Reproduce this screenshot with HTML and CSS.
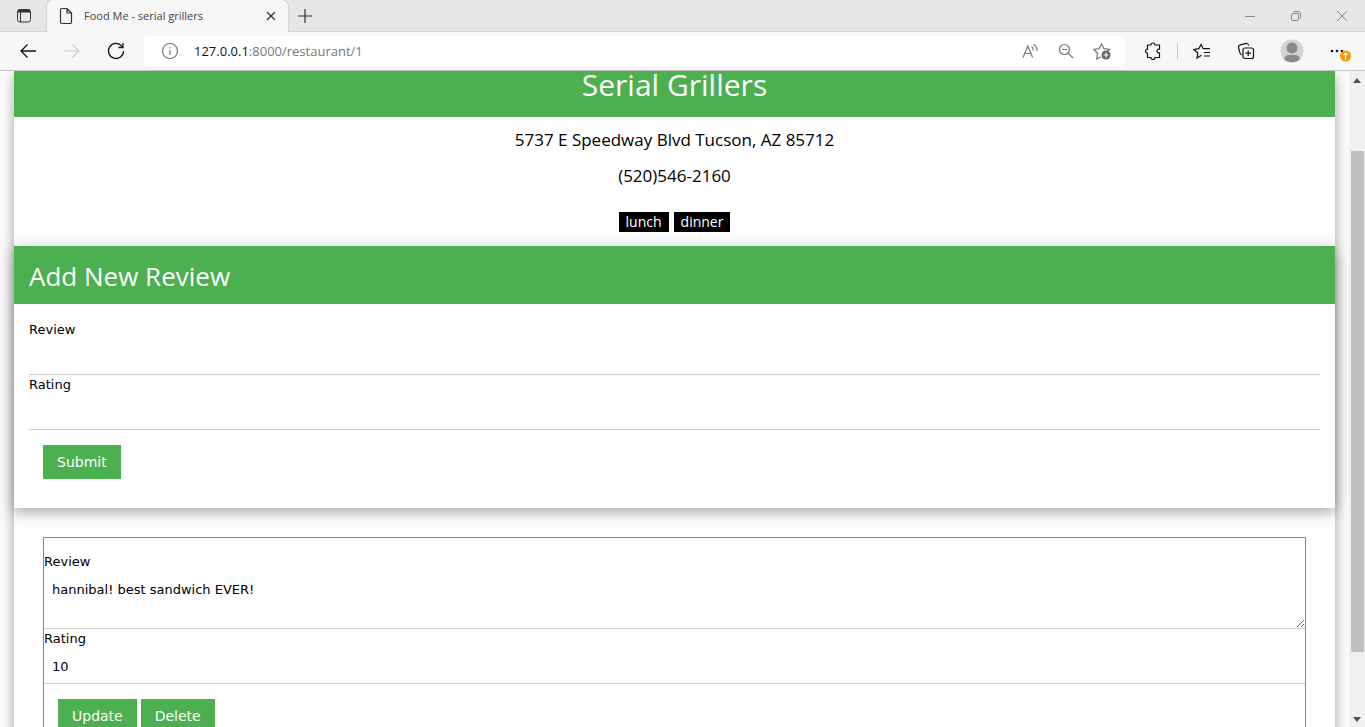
FILE: index.html
```html
<!DOCTYPE html>
<html lang="en">
<head>
<meta charset="utf-8">
<title>Food Me - serial grillers</title>
<link rel="stylesheet" href="styles.css">
</head>
<body>
<header class="browser">
  <div class="tabs">
    <button class="icon-btn tab-actions" aria-label="Tab actions"><svg width="16" height="16" viewBox="0 0 16 16" fill="none" stroke="#333"><rect x="1.500" y="1.500" width="13" height="12.500" rx="2.500"/><path d="M2 3.500h12M2 2.500h12" stroke-width="2.200"/><path d="M4.500 4v10"/></svg></button>
    <div class="tab">
      <svg width="14" height="18" viewBox="0 0 14 18" fill="none" stroke="#333" stroke-width="1.200"><path d="M3 1.500h5l4.500 4.500v9a1.500 1.500 0 0 1-1.500 1.500H3A1.500 1.500 0 0 1 1.500 15V3A1.500 1.500 0 0 1 3 1.500zM8 1.500V6h4.500"/></svg>
      <span class="tab-title">Food Me - serial grillers</span>
      <button class="icon-btn" aria-label="Close tab"><svg width="10" height="10" viewBox="0 0 10 10" stroke="#333" stroke-width="1.300"><path d="M1 1l8 8M9 1L1 9"/></svg></button>
    </div>
    <button class="icon-btn new-tab" aria-label="New tab"><svg width="16" height="16" viewBox="0 0 16 16" stroke="#333" stroke-width="1.200"><path d="M8 1v14M1 8h14"/></svg></button>
    <div class="window-controls">
      <button class="icon-btn" aria-label="Minimize"><svg width="12" height="12" viewBox="0 0 12 12" stroke="#888"><path d="M1 6.500h10"/></svg></button>
      <button class="icon-btn" aria-label="Restore"><svg width="12" height="12" viewBox="0 0 12 12" fill="none" stroke="#888"><rect x="1.500" y="3.500" width="7" height="7" rx="1.500"/><path d="M3.500 1.500H8A2.500 2.500 0 0 1 10.500 4v4.500"/></svg></button>
      <button class="icon-btn" aria-label="Close"><svg width="12" height="12" viewBox="0 0 12 12" stroke="#888"><path d="M1 1l10 10M11 1L1 11"/></svg></button>
    </div>
  </div>
  <div class="toolbar">
    <div class="nav">
      <button class="icon-btn" aria-label="Back"><svg width="18" height="16" viewBox="0 0 18 16" fill="none" stroke="#111" stroke-width="1.300"><path d="M17 8H2M8.500 1.500L2 8l6.500 6.500"/></svg></button>
      <button class="icon-btn" aria-label="Forward"><svg width="18" height="16" viewBox="0 0 18 16" fill="none" stroke="#ccc" stroke-width="1.200"><path d="M1 8h15M9.500 1.500L16 8l-6.500 6.500"/></svg></button>
      <button class="icon-btn" aria-label="Refresh"><svg width="18" height="18" viewBox="0 0 18 18" fill="none" stroke="#111" stroke-width="1.300"><path d="M16.500 9A7.500 7.500 0 1 1 14.800 4.200L15.500 5M16 1v4.500h-4.500"/></svg></button>
    </div>
    <div class="address">
      <svg width="18" height="18" viewBox="0 0 18 18" fill="none" stroke="#777" stroke-width="1.200"><circle cx="9" cy="9" r="7.500"/><path d="M9 8v5M9 5v1.500"/></svg>
      <div class="url"><span class="host">127.0.0.1</span>:8000/restaurant/1</div>
      <button class="icon-btn" aria-label="Read aloud"><svg width="18" height="16" viewBox="0 0 18 16" fill="none" stroke="#777" stroke-width="1.200"><path d="M2 14.500L6.800 3l4.800 11.500M3.800 10.500h6M10.500 3.500q2 1.500 1.700 4M12.500 1.200q4 2.500 3.500 7"/></svg></button>
      <button class="icon-btn" aria-label="Zoom out"><svg width="16" height="16" viewBox="0 0 16 16" fill="none" stroke="#777" stroke-width="1.200"><circle cx="6.500" cy="6.500" r="5"/><path d="M4 6.500h5M10.200 10.200l4.800 4.800"/></svg></button>
      <button class="icon-btn" aria-label="Add to favorites"><svg width="18" height="18" viewBox="0 0 18 18" fill="none" stroke="#777" stroke-width="1.200"><path d="M8 15l-4.300 2 .8-5.500L1 7.500l5-.8L8.500 2 11 6.700l5.500.8-2 2"/><circle cx="13" cy="13" r="4.500" fill="#666" stroke="none"/><path d="M13 10.500v5M10.500 13h5" stroke="#fff"/></svg></button>
    </div>
    <div class="extras">
      <button class="icon-btn" aria-label="Extensions"><svg width="18" height="18" viewBox="0 0 18 18" fill="none" stroke="#111" stroke-width="1.200" stroke-linejoin="round"><path d="M3.500 3H7a2 2 0 0 1 4 0h4.500v4.200a1.900 1.900 0 1 0 0 3.600V15.500H11a2 2 0 0 1-4 0H3.500v-4.300a2 2 0 0 1 0-4z"/></svg></button>
      <span class="divider"></span>
      <button class="icon-btn" aria-label="Favorites"><svg width="18" height="18" viewBox="0 0 18 18" fill="none" stroke="#111" stroke-width="1.200"><path d="M8.500 13.200L4 16l.8-5L1 7.500l4.800-.8L8 2.500l2.200 4.200H17M11 10.500h6M11 14h6"/></svg></button>
      <button class="icon-btn" aria-label="Collections"><svg width="18" height="18" viewBox="0 0 18 18" fill="none" stroke="#111" stroke-width="1.200"><path d="M4.500 13Q3 12 2.500 9.500L1.500 5.500Q1.200 3.500 3.500 2.800L9 1.300Q11 1 11.700 3.500"/><rect x="6" y="6" width="10.500" height="10.500" rx="2"/><path d="M11.200 8.500v5.500M8.500 11.200H14"/></svg></button>
      <button class="icon-btn wide" aria-label="Profile"><svg width="24" height="24" viewBox="0 0 24 24"><circle cx="12" cy="12" r="11.500" fill="#d4d2d0"/><circle cx="12" cy="9" r="5.500" fill="#8b8987"/><path d="M4 20q1-4 5-4h6q4 0 5 4a11.500 11.500 0 0 1-16 0z" fill="#8b8987"/></svg></button>
      <button class="icon-btn wide" aria-label="Settings and more"><svg width="24" height="24" viewBox="0 0 24 24"><g fill="#111"><circle cx="4" cy="12" r="1.300"/><circle cx="9" cy="12" r="1.300"/><circle cx="14" cy="12" r="1.300"/></g><circle cx="17.500" cy="17" r="5.500" fill="#f09a0a"/><path d="M17.500 20.500v-6.500M15.500 16l2-2 2 2" fill="none" stroke="#fff" stroke-width="1.200"/></svg></button>
    </div>
  </div>
</header>
<div class="viewport">
  <main class="page">
    <div class="restaurant">
      <h1 class="name">Serial Grillers</h1>
      <div class="details">
        <p class="detail">5737 E Speedway Blvd Tucson, AZ 85712</p>
        <p class="detail">(520)546-2160</p>
        <div class="tags"><span class="tag">lunch</span><span class="tag">dinner</span></div>
      </div>
      <section class="card">
        <h2 class="card-title">Add New Review</h2>
        <form class="new-form">
          <label class="label" for="new-review">Review</label>
          <input class="field" id="new-review" type="text">
          <label class="label" for="new-rating">Rating</label>
          <input class="field" id="new-rating" type="text">
          <div class="actions"><button class="btn" type="button">Submit</button></div>
        </form>
      </section>
      <form class="review">
        <label class="label" for="review">Review</label>
        <textarea class="field area" id="review">hannibal! best sandwich EVER!</textarea>
        <label class="label" for="rating">Rating</label>
        <input class="field" id="rating" type="text" value="10">
        <div class="actions"><button class="btn" type="button">Update</button><button class="btn" type="button">Delete</button></div>
      </form>
    </div>
  </main>
  <div class="scrollbar" aria-hidden="true">
    <svg width="8" height="5" viewBox="0 0 8 5"><path d="M0 5L4 0l4 5z" fill="#505050"/></svg>
    <div class="track"><div class="thumb"></div></div>
    <svg width="8" height="5" viewBox="0 0 8 5"><path d="M0 0l4 5 4-5z" fill="#505050"/></svg>
  </div>
</div>
</body>
</html>
```
FILE: styles.css
```css
* { box-sizing: border-box; }
body {
  margin: 0;
  height: 100vh;
  display: flex;
  flex-direction: column;
  overflow: hidden;
  background: #fff;
  color: #000;
  font: 14px/20px "DejaVu Sans", sans-serif;
}
h1, h2, p { margin: 0; font-weight: 400; }
.icon-btn {
  display: flex;
  align-items: center;
  justify-content: center;
  padding: 0;
  border: 0;
  background: none;
}
.browser {
  flex: none;
  background: #f7f7f7;
  border-bottom: 1px solid #c4c4c4;
  font-family: "Open Sans", sans-serif;
}
.tabs { display: flex; height: 32px; background: #e7e7e7; border-bottom: 1px solid #d4d4d4; }
.tab-actions { width: 47px; }
.tab {
  display: flex;
  align-items: center;
  gap: 11px;
  width: 241px;
  height: 32px;
  padding: 0 12px;
  background: #f7f7f7;
  border-radius: 6px 6px 0 0;
  box-shadow: 0 0 2px #aaa;
  clip-path: inset(0 -3px 0 -3px);
}
.tab-title { flex: 1; font-size: 11px; color: #444; }
.new-tab { width: 34px; }
.window-controls { display: flex; margin-left: auto; }
.window-controls .icon-btn { width: 46px; }
.toolbar { display: flex; align-items: center; height: 38px; }
.nav { display: flex; width: 144px; padding-left: 6px; }
.nav .icon-btn { width: 44px; }
.address {
  flex: 1;
  display: flex;
  align-items: center;
  gap: 19px;
  height: 30px;
  padding: 0 14px 0 17px;
  background: #fff;
  border-radius: 4px;
}
.url { flex: 1; margin-left: -4px; font-size: 13px; color: #777; }
.host { color: #111; }
.extras { display: flex; align-items: center; width: 240px; padding-left: 6px; }
.extras .icon-btn { width: 44px; }
.extras .wide { width: 48px; }
.divider { width: 1px; height: 16px; margin: 0 2px; background: #c4c4c4; }
.viewport { flex: 1; min-height: 0; display: flex; }
.page { flex: 1; padding: 0 14px; overflow: hidden; }
.restaurant { min-height: 100%; box-shadow: 0 4px 10px rgba(0, 0, 0, .2), 0 4px 20px rgba(0, 0, 0, .19); }
.name, .card-title, .detail, .tag { font-family: "Open Sans", sans-serif; }
.name {
  padding-bottom: 18px;
  background: #4caf50;
  color: #fff;
  font-size: 30px;
  line-height: 28px;
  text-align: center;
}
.details { padding: 5px 16px 14px; text-align: center; }
.detail { font-size: 17px; line-height: 36px; }
.tags { display: flex; justify-content: center; gap: 5px; margin-top: 18px; }
.tag { padding: 0 7px; background: #000; color: #fff; }
.card { box-shadow: 0 4px 10px rgba(0, 0, 0, .2), 0 4px 20px rgba(0, 0, 0, .19); }
.card-title { padding: 11px 15px 9px; background: #4caf50; color: #fff; font-size: 26px; line-height: 38px; }
.new-form { padding: 16px 15px 29px; }
.label { display: block; font-size: 13px; }
.field {
  display: block;
  width: 100%;
  height: 35px;
  padding: 7px 8px;
  border: 0;
  border-bottom: 1px solid #ccc;
  background: none;
  color: #000;
  font: 13px/20px "DejaVu Sans", sans-serif;
}
.area { height: 57px; padding-top: 8px; resize: vertical; overflow: auto; }
.actions { display: flex; gap: 4px; padding: 15px 14px 0; }
.btn {
  height: 34px;
  padding: 0 14px;
  border: 0;
  background: #4caf50;
  color: #fff;
  font: 14px/20px "DejaVu Sans", sans-serif;
}
.review { margin: 29px 29px 0; padding: 14px 0 29px; border: 1px solid #4caf50; }
.scrollbar {
  flex: none;
  display: flex;
  flex-direction: column;
  align-items: center;
  width: 16px;
  padding: 7px 0 5px;
  background: #f0f0f0;
}
.track { flex: 1; width: 13px; padding: 68px 0 65px; }
.thumb { height: 100%; background: #c1c1c1; }
```
